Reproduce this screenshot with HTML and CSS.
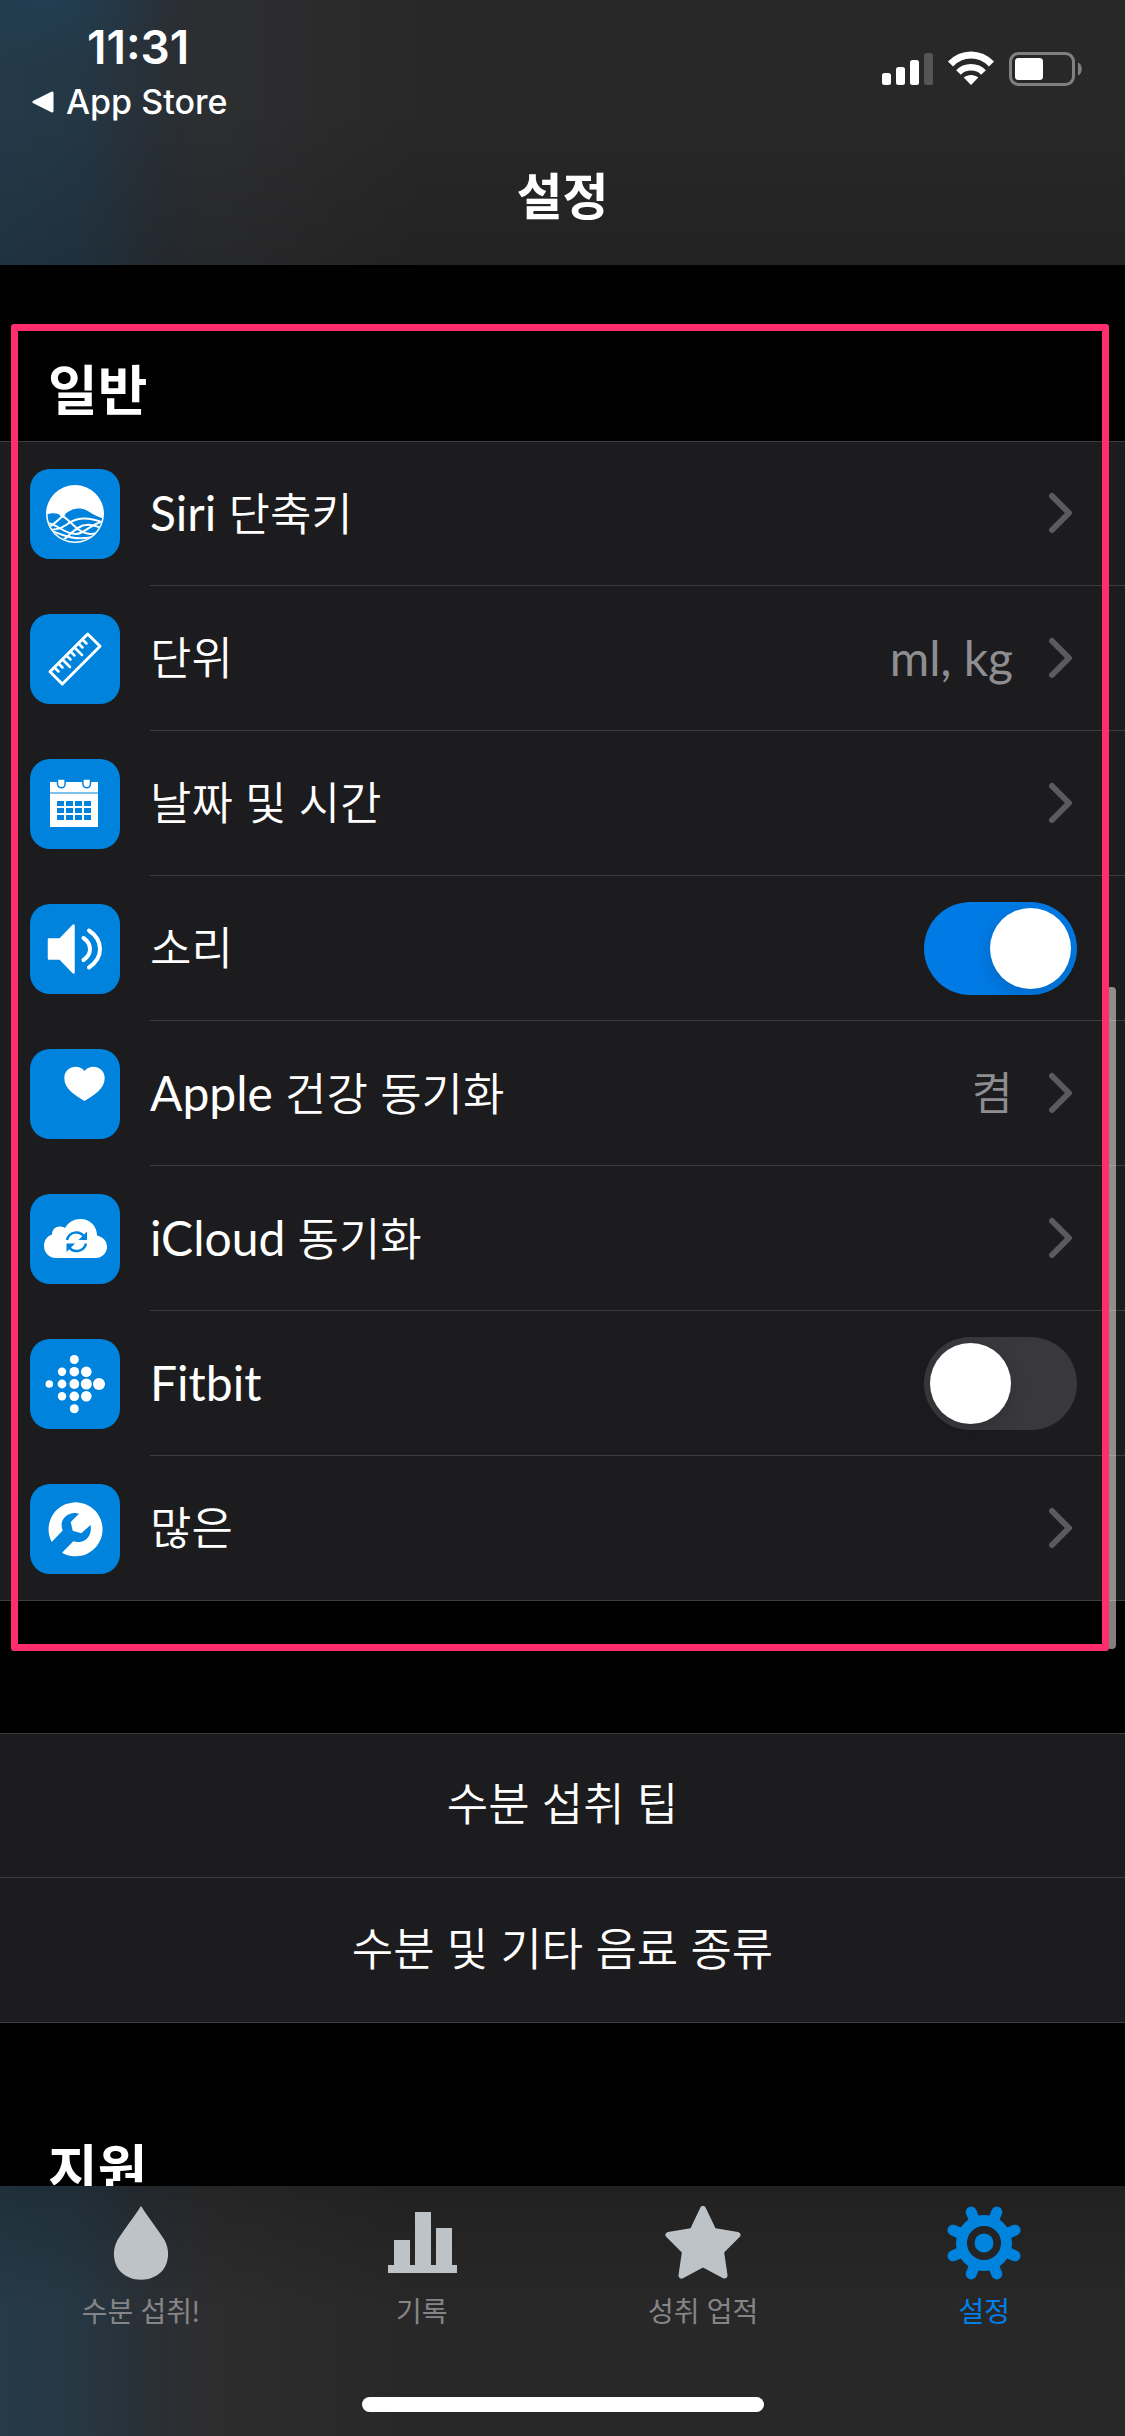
FILE: index.html
```html
<!DOCTYPE html>
<html lang="ko">
<head>
<meta charset="utf-8">
<meta name="viewport" content="width=device-width, initial-scale=1">
<title>설정</title>
<link rel="stylesheet" href="styles.css">
</head>
<body>
<svg class="defs" aria-hidden="true">
  <symbol id="chevron" viewBox="0 0 28 42"><path d="M3 4 20 21 3 38" fill="none" stroke="currentColor" stroke-width="6" stroke-linecap="round" stroke-linejoin="round"/></symbol>
</svg>
<div class="app">
  <header class="top">
    <div class="status">
      <div class="status-left">
        <time class="clock">11:31</time>
        <a class="back" href="#">
          <svg width="22" height="22" viewBox="0 0 22 22" aria-hidden="true"><path d="M2 11 20 2v18z" fill="#fff" stroke="#fff" stroke-width="3" stroke-linejoin="round"/></svg>
          <span>App Store</span>
        </a>
      </div>
      <svg class="status-icons" width="202" height="36" viewBox="881 51 202 36" role="img" aria-label="신호, Wi-Fi, 배터리">
        <g fill="#fff">
          <rect x="882" y="73" width="9" height="12" rx="2.5"/>
          <rect x="896" y="67" width="9" height="18" rx="2.5"/>
          <rect x="910" y="60" width="9" height="25" rx="2.5"/>
          <rect x="924" y="53" width="9" height="32" rx="2.5" fill="#555"/>
          <path d="M971 85 963.700 77.500C967.500 74 974.500 74 978.300 77.500z"/>
        </g>
        <path d="M958.500 72.500C965 65.500 977 65.500 983.500 72.500" fill="none" stroke="#fff" stroke-width="6.500"/>
        <path d="M950.500 64C962 52 980 52 991.500 64" fill="none" stroke="#fff" stroke-width="7"/>
        <rect x="1010.500" y="53.500" width="63" height="31" rx="8" fill="none" stroke="#808080" stroke-width="3"/>
        <rect x="1015" y="58" width="28" height="22" rx="3.500" fill="#fff"/>
        <path d="M1078 62.500c5 2 5 11 0 13z" fill="#808080"/>
      </svg>
    </div>
    <h1 class="title">설정</h1>
  </header>

  <main class="content">
    <h2 class="section-title">일반</h2>
    <ul class="group">
      <li class="row">
        <svg class="tile" viewBox="0 0 90 90" aria-hidden="true">
          <clipPath id="disc"><circle cx="45" cy="45" r="27.500"/></clipPath>
          <circle cx="45" cy="45" r="29" fill="#fff"/>
          <g clip-path="url(#disc)">
            <path d="M15 46C22 43 28 44 32 47C38 43 42 39.500 49 39.500C58 39.500 62 47 75 50V75H15z" fill="#0083dd"/>
            <g fill="none" stroke="#fff" stroke-width="2">
              <path d="M16 60C24 56 30 49 35 45"/>
              <path d="M30 46C40 49 46 64 60 65C66 65 70 62 74 60"/>
              <path d="M14 54C26 53 33 65 46 65C55 65 62 53 76 52"/>
              <path d="M14 60C24 62 30 60 36 56C44 50 54 46 74 54"/>
              <path d="M32 72C40 66 48 56 56 56C64 55 68 58 74 60"/>
              <path d="M22 62C32 66 46 72 62 68"/>
            </g>
          </g>
        </svg>
        <a class="body" href="#"><span class="name"><span class="latin">Siri</span> 단축키</span><svg class="chev"><use href="#chevron"/></svg></a>
      </li>
      <li class="row">
        <svg class="tile" viewBox="0 0 90 90" aria-hidden="true">
          <g fill="none" stroke="#fff" stroke-width="3" stroke-linejoin="round" stroke-linecap="round">
            <path d="M57.700 20 70 32.300 32.300 70 20 57.700z"/>
            <path d="M24.500 53.500l4 4M28.500 49.500l4 4M32.500 45.500l7.500 7.500M36.500 41.500l4 4M40.500 37.500l4 4M44.500 33.500l7.500 7.500M48.500 29.500l4 4M52.500 25.500l4 4" stroke-width="2.500"/>
          </g>
        </svg>
        <a class="body" href="#"><span class="name">단위</span><span class="value latin">ml, kg</span><svg class="chev"><use href="#chevron"/></svg></a>
      </li>
      <li class="row">
        <svg class="tile" viewBox="0 0 90 90" aria-hidden="true">
          <path d="M20 23h48v10H20zM20 35h48v33H20z" fill="#fff"/>
          <path d="M20 34h48" stroke="#7fc0ee" stroke-width="2"/>
          <path d="M27.500 20v5a3.800 3.800 0 0 0 7.600 0v-5zM52.900 20v5a3.800 3.800 0 0 0 7.600 0v-5z" fill="#fff" stroke="#0083dd" stroke-width="1.500"/>
          <path d="M27 42h7v5h-7zM36 42h7v5h-7zM45 42h7v5h-7zM54 42h7v5h-7zM27 49h7v5h-7zM36 49h7v5h-7zM45 49h7v5h-7zM54 49h7v5h-7zM27 56h7v5h-7zM36 56h7v5h-7zM45 56h7v5h-7zM54 56h7v5h-7z" fill="#0083dd"/>
        </svg>
        <a class="body" href="#"><span class="name">날짜 및 시간</span><svg class="chev"><use href="#chevron"/></svg></a>
      </li>
      <li class="row">
        <svg class="tile" viewBox="0 0 90 90" aria-hidden="true">
          <path d="M19 35.500H30L43.500 21.500V68.500L30 54.500H19z" fill="#fff" stroke="#fff" stroke-width="2.500" stroke-linejoin="round"/>
          <path d="M53.500 34Q60 38.500 60 45T53.500 56M59 26.500Q70 34 70 45T59 63.500" fill="none" stroke="#fff" stroke-width="4" stroke-linecap="round"/>
        </svg>
        <label class="body"><span class="name">소리</span><input class="switch" type="checkbox" role="switch" checked></label>
      </li>
      <li class="row">
        <svg class="tile" viewBox="0 0 90 90" aria-hidden="true">
          <path d="M54.500 52C45 46 34.300 40 34.300 29C34.300 18 48 14 54.500 22C61 14 74.700 18 74.700 29C74.700 40 64 46 54.500 52z" fill="#fff"/>
        </svg>
        <a class="body" href="#"><span class="name"><span class="latin">Apple</span> 건강 동기화</span><span class="value">켬</span><svg class="chev"><use href="#chevron"/></svg></a>
      </li>
      <li class="row">
        <svg class="tile" viewBox="0 0 90 90" aria-hidden="true">
          <path d="M26 64C18.500 64 14 58 14 52C14 46 17.500 42 22 40.500C22 33 29.500 30.500 35 34C38.500 28 44 25 50.500 25C60 25 67 32 67 41.500C73.500 43 77 47.500 77 53C77 59 72 64 65.500 64z" fill="#fff"/>
          <g fill="none" stroke="#0083dd" stroke-width="2.500">
            <path d="M37 46C39 37.500 49.500 36 54 42.500M56 49.500C54 58 43.500 59.500 39 53"/>
          </g>
          <path d="M57 37.500V46H48.500zM36.500 58v-8.500H45z" fill="#0083dd"/>
        </svg>
        <a class="body" href="#"><span class="name"><span class="latin">iCloud</span> 동기화</span><svg class="chev"><use href="#chevron"/></svg></a>
      </li>
      <li class="row">
        <svg class="tile" viewBox="0 0 90 90" aria-hidden="true">
          <g fill="#fff">
            <circle cx="44.300" cy="20.500" r="4.500"/><circle cx="32" cy="32.700" r="4.200"/><circle cx="44.300" cy="32.700" r="4.800"/><circle cx="56.300" cy="32.700" r="5.300"/>
            <circle cx="19.300" cy="45" r="3.800"/><circle cx="32" cy="45" r="4.400"/><circle cx="44.300" cy="45" r="4.900"/><circle cx="56.300" cy="45" r="5.500"/><circle cx="69" cy="45" r="6"/>
            <circle cx="32" cy="57.300" r="4.200"/><circle cx="44.300" cy="57.300" r="4.800"/><circle cx="56.300" cy="57.300" r="5.300"/><circle cx="44.300" cy="69.700" r="4.500"/>
          </g>
        </svg>
        <label class="body"><span class="name latin">Fitbit</span><input class="switch" type="checkbox" role="switch"></label>
      </li>
      <li class="row">
        <svg class="tile" viewBox="0 0 90 90" aria-hidden="true">
          <path d="M21.700 58A27 27 0 1 1 32 68.700L43.300 57.300C52 60.500 63 54 60.500 41L51.300 49.300 42.700 46.700 40.700 38 49 29.700C39 26.500 28 35 32.700 46.500z" fill="#fff"/>
        </svg>
        <a class="body" href="#"><span class="name">많은</span><svg class="chev"><use href="#chevron"/></svg></a>
      </li>
    </ul>

    <ul class="group links">
      <li class="link-row"><a href="#">수분 섭취 팁</a></li>
      <li class="link-row"><a href="#">수분 및 기타 음료 종류</a></li>
    </ul>

    <h2 class="section-title later">지원</h2>
    <div class="scrollbar"></div>
    <div class="highlight"></div>
  </main>

  <footer class="bottom">
    <nav class="tabs">
      <a class="tab" href="#">
        <svg viewBox="0 0 76 74" aria-hidden="true"><path d="M38 0C45 11 56 25 61.500 34C67 44 66 56 60 64C49 77 27 77 16 64C10 56 9 44 14.500 34C20 25 31 11 38 0z" fill="#bdc3c7"/></svg>
        <span>수분 섭취!</span>
      </a>
      <a class="tab" href="#">
        <svg viewBox="0 0 76 74" aria-hidden="true"><path d="M4 59h6V34h16v25h5V6h16v53h5V22h16v37h5v8H4z" fill="#bdc3c7"/></svg>
        <span>기록</span>
      </a>
      <a class="tab" href="#">
        <svg viewBox="0 0 76 74" aria-hidden="true"><path d="M38 3 48.500 25 72.500 29 56 45.500 59.500 69.500 38 58 16.500 69.500 20 45.500 3.500 29 27.500 25z" fill="#bdc3c7" stroke="#bdc3c7" stroke-width="6" stroke-linejoin="round"/></svg>
        <span>성취 업적</span>
      </a>
      <a class="tab active" href="#" aria-current="page">
        <svg viewBox="0 0 76 74" aria-hidden="true">
          <g fill="none" stroke="#0083dd">
            <circle cx="38" cy="37" r="22.500" stroke-width="11"/>
            <path d="M62 27.100 69 24.200M14 46.900 7 49.800M47.900 61 50.800 68M28.100 13 25.200 6M14 27.100 7 24.200M62 46.900 69 49.800M28.100 61 25.200 68M47.900 13 50.800 6" stroke-width="11" stroke-linecap="round"/>
          </g>
          <circle cx="38" cy="37" r="9.500" fill="#0083dd"/>
        </svg>
        <span>설정</span>
      </a>
    </nav>
    <div class="home"></div>
  </footer>
</div>
</body>
</html>
```
FILE: styles.css
```css
* { box-sizing: border-box; }

body {
  margin: 0;
  background: #000;
  color: #fff;
  font-family: Lato, "Noto Sans CJK KR", sans-serif;
  font-weight: 350;
  font-size: 45px;
  line-height: 64px;
}

h1, h2, ul { margin: 0; padding: 0; }
ul { list-style: none; }
a { color: inherit; text-decoration: none; }
.defs { position: absolute; width: 0; height: 0; }

.app {
  display: flex;
  flex-direction: column;
  height: 100vh;
  overflow: hidden;
}

/* Translucent bars */
.top, .bottom {
  flex: none;
  background-color: #282828;
}
.top {
  padding-bottom: 36px;
  background-image:
    linear-gradient(180deg, rgba(0, 0, 0, 0) 40%, rgba(0, 0, 0, 0.14) 100%),
    radial-gradient(ellipse 130px 70px at 50px 0, rgba(30, 70, 96, 0.4), rgba(30, 70, 96, 0)),
    linear-gradient(90deg, #243a49 0, #243745 80px, #292f35 160px, #2d2e30 220px, #282828 420px);
}
.bottom {
  background-image:
    linear-gradient(180deg, rgba(0, 0, 0, 0.18) 0, rgba(0, 0, 0, 0) 50%),
    linear-gradient(90deg, #263a47 0, #263844 70px, #2a3036 145px, #2d2d2e 210px, #282828 400px);
}

.status {
  display: flex;
  justify-content: space-between;
  align-items: flex-start;
  padding: 20px 42px 0 32px;
  font-family: Inter, "Liberation Sans", sans-serif;
}
.clock {
  display: block;
  padding-left: 55px;
  font-size: 46px;
  font-weight: 600;
  line-height: 54px;
}
.back {
  display: flex;
  align-items: center;
  gap: 12px;
  padding-top: 8px;
  font-size: 34px;
  font-weight: 450;
  line-height: 40px;
}
.status-icons { margin-top: 31px; }

.title {
  padding-top: 42px;
  font-size: 50px;
  font-weight: 700;
  line-height: 65px;
  text-align: center;
}

/* Scrolling settings list */
.content {
  position: relative;
  flex: 1;
  min-height: 0;
  overflow: hidden;
}
.section-title {
  padding: 86px 48px 10px;
  font-size: 54px;
  font-weight: 700;
  line-height: 80px;
}
.section-title.later { padding-top: 107px; }

.group {
  background: #1c1c1e;
  box-shadow: inset 0 1px #3d3d41, inset 0 -1px #3d3d41;
}
.row {
  display: flex;
  gap: 30px;
  padding-left: 30px;
}
.tile {
  flex: none;
  width: 90px;
  height: 90px;
  margin-top: 28px;
  border-radius: 20px;
  background: #0083dd;
}
.body {
  flex: 1;
  display: flex;
  align-items: center;
  min-height: 145px;
  padding-right: 48px;
  border-bottom: 1px solid #3d3d41;
}
.row:last-child .body { border-bottom-color: transparent; }
.name { flex: 1; }
.latin {
  font-size: 48px;
  font-weight: 400;
}
.value {
  margin-right: 36px;
  color: #8e8e92;
}
.chev {
  width: 28px;
  height: 42px;
  color: #5a5a5f;
}

.switch {
  appearance: none;
  width: 153px;
  height: 93px;
  margin: 0;
  padding: 6px;
  border-radius: 47px;
  background: #39393d;
}
.switch::before {
  content: "";
  display: block;
  width: 81px;
  height: 81px;
  border-radius: 50%;
  background: #fff;
  box-shadow: 0 6px 20px rgba(0, 0, 0, 0.14);
}
.switch:checked { background: #007ae5; }
.switch:checked::before { margin-left: auto; }

.links { margin-top: 132px; }
.link-row a {
  display: flex;
  align-items: center;
  justify-content: center;
  min-height: 145px;
  padding-bottom: 3px;
}
.link-row + .link-row { box-shadow: 0 -1px #3d3d41; }

.scrollbar {
  position: absolute;
  top: 722px;
  right: 9px;
  width: 9px;
  height: 662px;
  border-radius: 4px;
  background: rgba(255, 255, 255, 0.5);
}
.highlight {
  position: absolute;
  top: 59px;
  left: 11px;
  right: 16px;
  height: 1327px;
  border: 7px solid #ff2d6b;
  border-radius: 3px;
  pointer-events: none;
}

/* Tab bar */
.bottom {
  padding: 20px 0 24px;
}
.tabs {
  display: grid;
  grid-template-columns: repeat(4, 1fr);
}
.tab {
  display: flex;
  flex-direction: column;
  align-items: center;
  gap: 10px;
  color: #858587;
  font-size: 28px;
  font-weight: 400;
  line-height: 42px;
}
.tab svg {
  width: 76px;
  height: 74px;
}
.tab.active { color: #0080ea; }
.home {
  width: 402px;
  height: 15px;
  margin: 65px auto 0;
  border-radius: 8px;
  background: #fff;
}
```
